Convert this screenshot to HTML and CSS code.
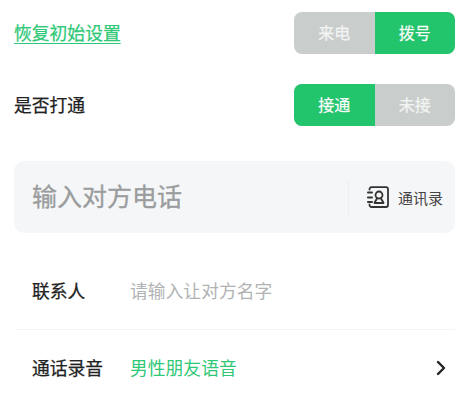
FILE: index.html
```html
<!DOCTYPE html>
<html lang="zh-CN">
<head>
    <meta charset="UTF-8">
    <meta name="viewport" content="width=device-width, initial-scale=1.0">
    <title>恢复初始设置</title>
    <link rel="stylesheet" href="styles.css">
</head>
<body>
    <div class="page">
        <div class="option-row">
            <a href="#" class="reset-link">恢复初始设置</a>
            <div class="segment">
                <span class="segment-item">来电</span>
                <span class="segment-item active">拨号</span>
            </div>
        </div>

        <div class="option-row">
            <span class="option-label">是否打通</span>
            <div class="segment">
                <span class="segment-item active">接通</span>
                <span class="segment-item">未接</span>
            </div>
        </div>

        <div class="phone-box">
            <span class="phone-placeholder">输入对方电话</span>
            <div class="contacts-btn">
                <svg class="contacts-icon" width="22" height="22" viewBox="0 0 22 22" fill="none" stroke="#333333" stroke-width="1.800" stroke-linecap="round" stroke-linejoin="round">
                    <path d="M2.500 3.500V3.200a2 2 0 0 1 2-2H19a2 2 0 0 1 2 2v15.800a2 2 0 0 1-2 2H4.500a2 2 0 0 1-2-2v-.5"/>
                    <path d="M.9 6.500h4.200M.9 11.500h4.200M.9 16h4.200"/>
                    <circle cx="12" cy="9" r="3.500"/>
                    <path d="M10 12c-.3 2-2 3-2.500 5h9c-.5-2-2.200-3-2.500-5"/>
                </svg>
                <span class="contacts-text">通讯录</span>
            </div>
        </div>

        <div class="form-row form-row-border">
            <span class="form-label">联系人</span>
            <span class="form-placeholder">请输入让对方名字</span>
        </div>

        <div class="form-row">
            <span class="form-label">通话录音</span>
            <span class="form-value">男性朋友语音</span>
            <svg class="arrow-icon" width="10" height="16" viewBox="0 0 10 16" fill="none" stroke="#222222" stroke-width="2.400" stroke-linecap="round" stroke-linejoin="round">
                <path d="M2 2l6 6-6 6"/>
            </svg>
        </div>
    </div>
</body>
</html>
```

FILE: styles.css
```css
* {
    margin: 0;
    padding: 0;
    box-sizing: border-box;
}

body {
    font-family: "Liberation Sans", "Noto Sans CJK SC", sans-serif;
    background: #ffffff;
    color: #222222;
}

.page {
    padding: 12px 12px 0 14px;
}

.option-row {
    display: flex;
    align-items: center;
    justify-content: space-between;
    height: 42px;
    margin-bottom: 30px;
}

.reset-link {
    padding-bottom: 2px;
    color: #2fc877;
    font-size: 17.800px;
    -webkit-text-stroke: 0.25px #2fc877;
    text-decoration: underline;
    text-underline-offset: 3px;
}

.option-label {
    padding-bottom: 2px;
    font-size: 17.800px;
    -webkit-text-stroke: 0.25px #222222;
}

.segment {
    display: flex;
    width: 161px;
    height: 42px;
    border-radius: 8px;
    overflow: hidden;
    background: #c9cecc;
}

.segment-item {
    flex: 1;
    display: flex;
    align-items: center;
    justify-content: center;
    padding-bottom: 2px;
    color: #f2f4f3;
    font-size: 16px;
    -webkit-text-stroke: 0.25px #f2f4f3;
}

.segment-item.active {
    background: #22c46c;
    color: #ffffff;
}

.phone-box {
    display: flex;
    align-items: center;
    justify-content: space-between;
    height: 72px;
    margin-top: 35px;
    padding: 0 12px 0 18px;
    background: #f5f6f7;
    border-radius: 10px;
}

.phone-placeholder {
    padding-bottom: 4px;
    color: #9a9c9d;
    font-size: 25px;
    -webkit-text-stroke: 0.3px #9a9c9d;
}

.contacts-btn {
    display: flex;
    align-items: center;
    height: 34px;
    padding-left: 18px;
    border-left: 1px solid #eceded;
}

.contacts-icon {
    margin-right: 9px;
}

.contacts-text {
    font-size: 15px;
    color: #444444;
}

.form-row {
    display: flex;
    align-items: center;
    height: 74px;
    margin-left: 1px;
    padding: 0 9px 0 17px;
}

.form-row-border {
    height: 97px;
    padding-top: 18px;
    padding-bottom: 1px;
    border-bottom: 1px solid #f3f4f4;
}

.form-label {
    width: 98px;
    font-size: 17.800px;
    color: #222222;
    -webkit-text-stroke: 0.25px #222222;
}

.form-placeholder {
    font-size: 17.800px;
    color: #b0b2b3;
}

.form-value {
    flex: 1;
    font-size: 17.800px;
    color: #2fc877;
}

.arrow-icon {
    margin-top: 2px;
}
```
